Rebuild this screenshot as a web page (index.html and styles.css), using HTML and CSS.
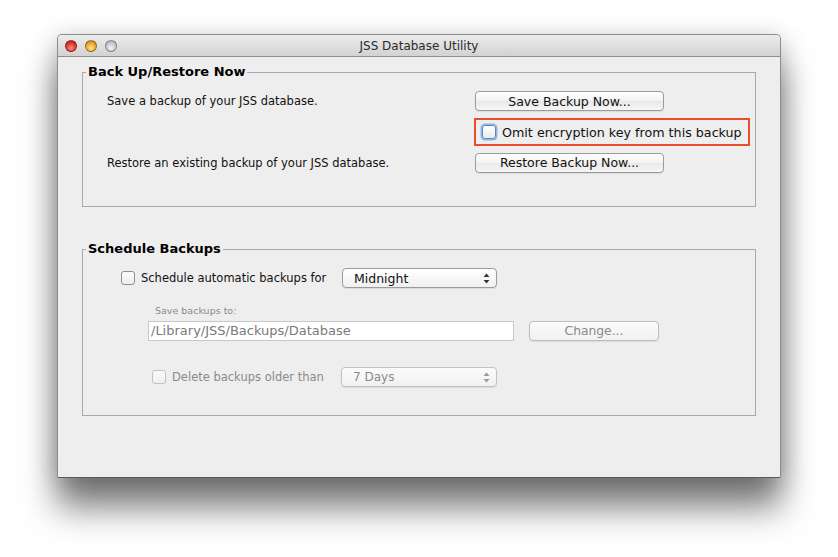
FILE: index.html
```html
<!DOCTYPE html>
<html lang="en">
<head>
  <meta charset="UTF-8" />
  <title>JSS Database Utility</title>
  <link rel="stylesheet" href="styles.css">
</head>
<body>
  <div class="window">
    <div class="titlebar">
      <div class="lights">
        <span class="light red"></span>
        <span class="light yellow"></span>
        <span class="light gray"></span>
      </div>
      <div class="title">JSS Database Utility</div>
    </div>

    <div class="content">
      <fieldset class="group first">
        <legend>Back Up/Restore Now</legend>
        <div class="now-grid">
          <div class="label">Save a backup of your JSS database.</div>
          <div><button class="btn wide">Save Backup Now...</button></div>

          <div></div>
          <div class="highlight">
            <span class="check focused"></span>
            <span>Omit encryption key from this backup</span>
          </div>

          <div class="label">Restore an existing backup of your JSS database.</div>
          <div><button class="btn wide">Restore Backup Now...</button></div>
        </div>
      </fieldset>

      <fieldset class="group second">
        <legend>Schedule Backups</legend>

        <div class="row schedule">
          <div class="check-label sched-label">
            <span class="check"></span>
            <span>Schedule automatic backups for</span>
          </div>
          <div class="select">
            <span>Midnight</span>
            <svg class="arrows" width="7" height="11" viewBox="0 0 7 11">
              <path d="M3.5 0.5 L6.5 4 L0.5 4 Z" />
              <path d="M0.5 7 L6.5 7 L3.5 10.5 Z" />
            </svg>
          </div>
        </div>

        <div class="path-block">
          <div class="small-label">Save backups to:</div>
          <div class="path-row">
            <div class="field">/Library/JSS/Backups/Database</div>
            <button class="btn change" disabled>Change...</button>
          </div>
        </div>

        <div class="row delete">
          <div class="check-label delete-label disabled">
            <span class="check off"></span>
            <span>Delete backups older than</span>
          </div>
          <div class="select off">
            <span>7 Days</span>
            <svg class="arrows" width="7" height="11" viewBox="0 0 7 11">
              <path d="M3.5 0.5 L6.5 4 L0.5 4 Z" />
              <path d="M0.5 7 L6.5 7 L3.5 10.5 Z" />
            </svg>
          </div>
        </div>
      </fieldset>
    </div>
  </div>
</body>
</html>
```

FILE: styles.css
```css
* {
  box-sizing: border-box;
}
html, body {
  margin: 0;
  background: #fff;
}
body {
  min-height: 557px;
  padding: 34px 0 0 57px;
  font-family: "DejaVu Sans", "Liberation Sans", sans-serif;
  font-size: 11.5px;
  color: #111;
}
.window {
  width: 724px;
  height: 444px;
  background: #eeeeee;
  border: 1px solid #8c8c8c;
  border-bottom-color: #5a5a5a;
  border-radius: 5px 5px 2px 2px;
  box-shadow: 0 30px 34px rgba(0, 0, 0, 0.5), 0 4px 26px rgba(0, 0, 0, 0.22);
  overflow: hidden;
}
.titlebar {
  height: 22px;
  background: linear-gradient(#ececec, #d2d2d2);
  border-bottom: 1px solid #8e8e8e;
  display: flex;
  align-items: center;
  position: relative;
}
.lights {
  display: flex;
  gap: 8px;
  padding-left: 7px;
}
.light {
  width: 12px;
  height: 12px;
  border-radius: 50%;
  border: 1px solid rgba(0, 0, 0, 0.35);
}
.light.red {
  background: radial-gradient(circle at 50% 70%, #ff8a80, #d9302a 60%, #a81c16);
}
.light.yellow {
  background: radial-gradient(circle at 50% 70%, #ffe58a, #e5a52c 60%, #b97a10);
}
.light.gray {
  background: radial-gradient(circle at 50% 70%, #f4f4f4, #c6c6c6 60%, #a6a6a6);
}
.title {
  position: absolute;
  left: 0;
  right: 0;
  text-align: center;
  font-size: 12px;
  color: #2a2a2a;
  pointer-events: none;
}
.content {
  padding: 7px 24px 0 24px;
}
.group {
  margin: 0;
  border: 1px solid #a9a9a9;
  padding: 11px 0 33px 24px;
  min-width: 0;
}
.group legend {
  font-weight: bold;
  font-size: 13px;
  line-height: 16px;
  padding: 0 2px;
  margin-left: 4px;
  color: #000;
}
.group.first legend {
  margin-left: -21px;
}
.group.second legend {
  margin-left: 3px;
}
.group.second {
  margin-top: 34px;
  padding: 11px 0 28px 0;
}
.now-grid {
  display: grid;
  grid-template-columns: 367px auto;
  grid-template-rows: 20px 28px 20px;
  row-gap: 7px;
  align-items: center;
}
.now-grid > :nth-child(5),
.now-grid > :nth-child(6) {
  margin-top: -1px;
}
.label {
  line-height: 20px;
}
.btn {
  font-family: inherit;
  font-size: 12.5px;
  height: 20px;
  border: 1px solid #9b9b9b;
  border-radius: 4px;
  background: linear-gradient(#ffffff, #f3f3f3 50%, #e9e9e9 51%, #f6f6f6);
  color: #111;
  padding: 0;
  box-shadow: 0 1px 1px rgba(0, 0, 0, 0.08);
}
.btn.wide {
  width: 189px;
  margin-left: 1px;
  display: block;
}
.btn:disabled {
  color: #8a8a8a;
  border-color: #bdbdbd;
  background: linear-gradient(#fbfbfb, #f1f1f1);
}
.highlight {
  width: 276px;
  height: 28px;
  border: 2px solid #e84d2c;
  display: flex;
  align-items: center;
  gap: 6px;
  padding-left: 6px;
  font-size: 12.7px;
}
.check {
  display: inline-block;
  width: 14px;
  height: 14px;
  border: 1px solid #8f8f8f;
  border-radius: 3px;
  background: linear-gradient(#ffffff, #ececec);
  flex-shrink: 0;
}
.check.focused {
  border-color: #5b87c4;
  box-shadow: 0 0 0 1.5px #8db5ea;
}
.check.off {
  border-color: #c2c2c2;
  background: linear-gradient(#fafafa, #f0f0f0);
}
.row {
  display: flex;
  align-items: center;
  height: 20px;
}
.check-label {
  display: flex;
  align-items: center;
  gap: 6px;
}
.sched-label {
  margin-left: 38px;
  width: 221px;
}
.delete-label {
  margin-left: 69px;
  width: 189px;
}
.disabled {
  color: #8a8a8a;
}
.select {
  width: 155px;
  height: 20px;
  border: 1px solid #9b9b9b;
  border-radius: 4px;
  background: linear-gradient(#ffffff, #f0f0f0);
  display: flex;
  align-items: center;
  justify-content: space-between;
  padding: 0 6px 0 11px;
  font-size: 12.5px;
  box-shadow: 0 1px 1px rgba(0, 0, 0, 0.08);
}
.select .arrows path {
  fill: #333;
}
.select.off {
  width: 156px;
  border-color: #c2c2c2;
  color: #8a8a8a;
  background: linear-gradient(#fbfbfb, #f1f1f1);
  font-size: 12px;
}
.select.off .arrows path {
  fill: #999;
}
.path-block {
  margin: 16px 0 0 65px;
}
.small-label {
  font-size: 9.5px;
  line-height: 14px;
  color: #8a8a8a;
  margin-left: 7px;
  margin-bottom: 3px;
}
.path-row {
  display: flex;
  gap: 15px;
}
.field {
  width: 366px;
  height: 20px;
  background: #fff;
  border: 1px solid #c8c8c8;
  color: #7a7a7a;
  font-size: 13px;
  line-height: 18px;
  padding-left: 2px;
}
.btn.change {
  width: 130px;
  font-size: 12.3px;
}
.row.delete {
  margin-top: 26px;
}
```
